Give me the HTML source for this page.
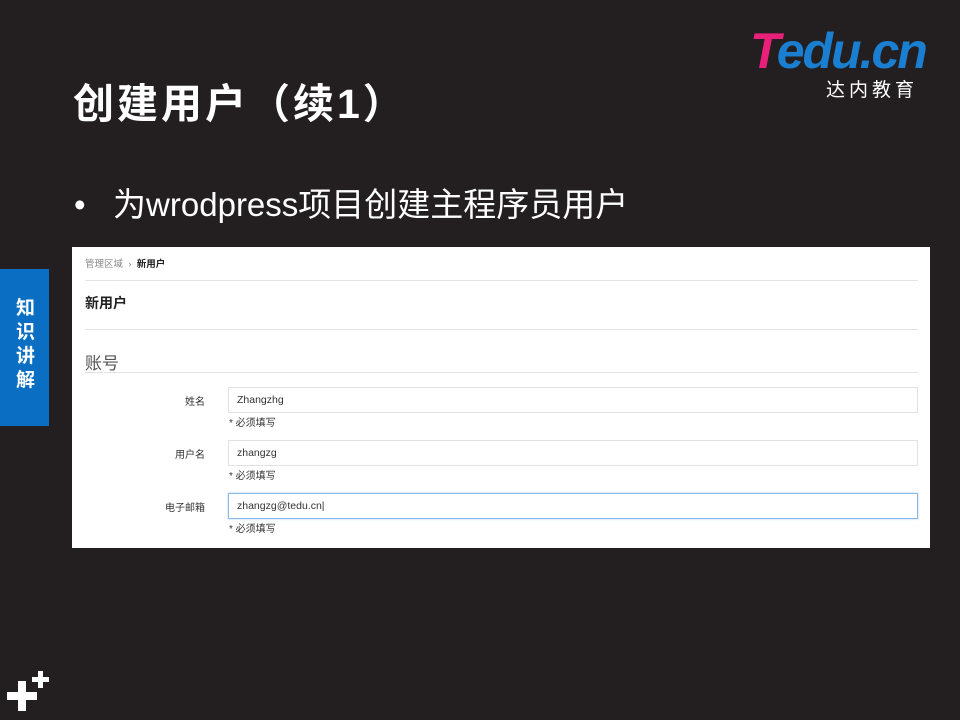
<!DOCTYPE html>
<html><head><meta charset="utf-8"><style>
*{margin:0;padding:0;box-sizing:border-box}
body{width:960px;height:720px;background:#231f20;position:relative;overflow:hidden;font-family:"Liberation Sans","Noto Sans CJK SC",sans-serif}
.a{position:absolute}
.title{left:73px;top:70px;color:#fff;font-size:41px;font-weight:bold;white-space:nowrap;letter-spacing:3px}
.bul{left:74px;top:178px;color:#fff;font-size:33px;white-space:nowrap}
.side{left:0;top:269px;width:49px;height:157px;background:#0a6fc2;color:#fff;font-weight:bold;font-size:19px;line-height:24px;text-align:center;padding-top:28px;padding-left:2px}
.panel{left:72px;top:247px;width:858px;height:301px;background:#fff}
.hr{position:absolute;left:13px;right:12px;height:1px;background:#e3e3e3}
.lbl{position:absolute;width:133px;text-align:right;font-size:10px;color:#333}
.inp{position:absolute;left:156px;width:690px;height:26px;border:1px solid #e2e2e2;font-size:10.5px;color:#333;padding:6px 8px;line-height:12px}
.hint{position:absolute;left:157px;font-size:10px;color:#333}
</style></head><body>
<div class="a title">创建用户（续1）</div>
<div class="a bul">•&nbsp;&nbsp;&nbsp;为wrodpress项目创建主程序员用户</div>
<div class="a" style="left:750px;top:28px;font-size:50px;font-weight:bold;font-style:italic;letter-spacing:-2px;line-height:46px;white-space:nowrap"><span style="color:#e8207a">T</span><span style="color:#1a7fd0">edu.cn</span></div>
<div class="a" style="left:826px;top:75px;color:#fff;font-size:19px;letter-spacing:4px;white-space:nowrap">达内教育</div>
<div class="a side">知<br>识<br>讲<br>解</div>
<div class="a panel">
 <div class="a" style="left:13px;top:9px;font-size:9.5px;color:#888">管理区域 &nbsp;›&nbsp; <b style="color:#222">新用户</b></div>
 <div class="hr" style="top:33px"></div>
 <div class="a" style="left:13px;top:46px;font-size:14px;font-weight:bold;color:#222">新用户</div>
 <div class="hr" style="top:82px"></div>
 <div class="a" style="left:13px;top:102px;font-size:17px;color:#555">账号</div>
 <div class="hr" style="top:125px"></div>
 <div class="lbl" style="top:146px">姓名</div>
 <div class="inp" style="top:140px">Zhangzhg</div>
 <div class="hint" style="top:167px">* 必须填写</div>
 <div class="lbl" style="top:199px">用户名</div>
 <div class="inp" style="top:193px">zhangzg</div>
 <div class="hint" style="top:220px">* 必须填写</div>
 <div class="lbl" style="top:252px">电子邮箱</div>
 <div class="inp" style="top:246px;border-color:#8ab8ea;box-shadow:0 0 2px #a8cdf3">zhangzg@tedu.cn|</div>
 <div class="hint" style="top:273px">* 必须填写</div>
</div>
<svg class="a" style="left:0;top:668px" width="60" height="52"><g fill="#fff"><rect x="7" y="24" width="30" height="8"/><rect x="18" y="13" width="8" height="30"/><rect x="32" y="9" width="17" height="5"/><rect x="38" y="3" width="5" height="17"/></g></svg>
</body></html>
